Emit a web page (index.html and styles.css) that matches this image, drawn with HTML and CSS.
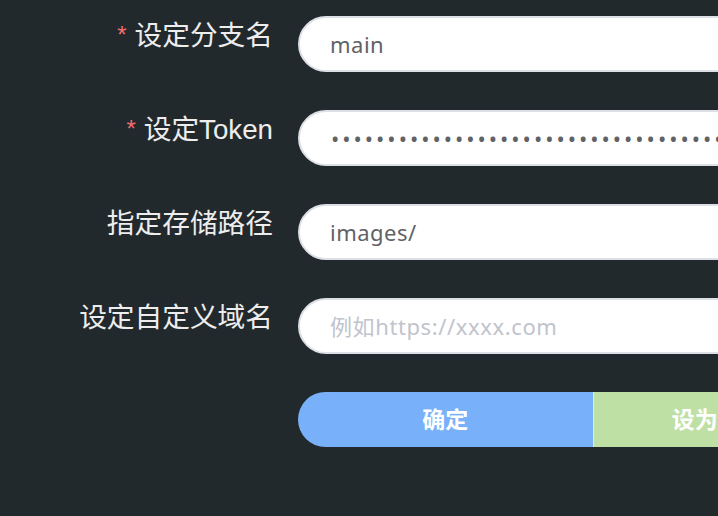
FILE: index.html
```html
<!DOCTYPE html>
<html lang="zh-CN">
<head>
<meta charset="utf-8">
<title>设置</title>
<link rel="stylesheet" href="styles.css">
</head>
<body>
<form class="form">
  <div class="row">
    <label class="label required">设定分支名</label>
    <div class="control"><input class="input" type="text" value="main"></div>
  </div>
  <div class="row">
    <label class="label required">设定Token</label>
    <div class="control"><input class="input password" type="password" value="xxxxxxxxxxxxxxxxxxxxxxxxxxxxxxxxxxxxxxxx"></div>
  </div>
  <div class="row">
    <label class="label">指定存储路径</label>
    <div class="control"><input class="input" type="text" value="images/"></div>
  </div>
  <div class="row">
    <label class="label">设定自定义域名</label>
    <div class="control"><input class="input" type="text" placeholder="例如https://xxxx.com"></div>
  </div>
  <div class="row">
    <div class="label"></div>
    <div class="control btn-group">
      <button type="button" class="btn btn-primary">确定</button>
      <button type="button" class="btn btn-success">设为默认图床</button>
    </div>
  </div>
</form>
</body>
</html>
```

FILE: styles.css
```css
html, body {
  margin: 0;
  padding: 0;
  overflow: hidden;
  background: #22292d;
}
body {
  width: 718px;
  height: 516px;
  font-family: "Noto Sans", "Noto Sans CJK SC", sans-serif;
}
.form {
  display: flex;
  flex-direction: column;
  gap: 38px;
  padding-top: 16px;
  width: 900px;
}
.row {
  display: grid;
  grid-template-columns: 273px 590px;
  column-gap: 25px;
  align-items: start;
}
.label {
  text-align: right;
  color: #ededed;
  font-family: "Liberation Sans", "Noto Sans CJK SC", sans-serif;
  font-size: 27.7px;
  line-height: 40px;
  white-space: nowrap;
}
.label.required::before {
  content: "*";
  color: #f56c6c;
  margin-right: 8px;
  font-size: 24px;
  position: relative;
  top: -2px;
}
.control {
  height: 56px;
}
.input {
  box-sizing: border-box;
  width: 100%;
  height: 56px;
  border: 2px solid #dcdfe6;
  border-radius: 28px;
  background: #fff;
  padding: 0 30px;
  font-family: "Noto Sans", "Noto Sans CJK SC", sans-serif;
  font-size: 22px;
  letter-spacing: 0.5px;
  color: #606266;
  outline: none;
}
.input::placeholder {
  color: #c0c4cc;
  letter-spacing: 0.6px;
}
.input.password {
  letter-spacing: 3px;
  padding-left: 31px;
}
.btn-group {
  display: flex;
  height: 55px;
}
.btn {
  flex: 1 1 0;
  border: none;
  margin: 0;
  height: 55px;
  padding: 0 0 3px;
  color: #fff;
  font-family: "Noto Sans CJK SC", sans-serif;
  font-weight: 700;
  font-size: 23px;
  white-space: nowrap;
}
.btn-primary {
  background: #78b1f9;
  border-radius: 28px 0 0 28px;
}
.btn-success {
  background: #bfe0a5;
  border-left: 1px solid #dfefd2;
  border-radius: 0 28px 28px 0;
}
```
